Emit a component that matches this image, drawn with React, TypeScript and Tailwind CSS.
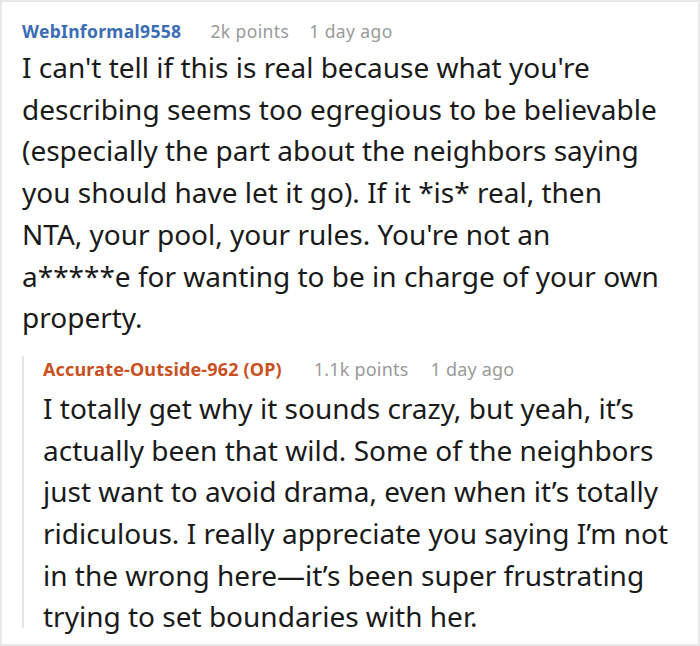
import React from "react";

export default function App() {
  return (
    <div className="w-[700px] h-[646px] bg-white border-2 border-[#e8e8e8] box-border overflow-hidden font-['Noto_Sans',sans-serif]">
      <div className="pl-[20px] pr-[4px] pt-[16px]">
        <div className="flex items-baseline text-[17.5px] leading-[26px] whitespace-nowrap">
          <span className="font-bold text-[#3a6db3] tracking-[0.32px]">WebInformal9558</span>
          <span className="ml-[29px] text-[#9a9a9a] tracking-[0.4px]">2k points</span>
          <span className="ml-[20px] text-[#9a9a9a] tracking-[0.4px]">1 day ago</span>
        </div>
        <p className="mt-[3px] text-[28px] leading-[41.7px] text-[#1a1a1a] whitespace-nowrap">
          I can't tell if this is real because what you're<br />
          describing seems too egregious to be believable<br />
          (especially the part about the neighbors saying<br />
          you should have let it go). If it *is* real, then<br />
          NTA, your pool, your rules. You're not an<br />
          a*****e for wanting to be in charge of your own<br />
          property.
        </p>
        <div className="mt-[17px] flex">
          <div className="w-[2px] bg-[#e6e6e6] mb-[10px]" />
          <div className="pl-[19px]">
            <div className="flex items-baseline text-[18px] leading-[26px] whitespace-nowrap">
              <span className="font-bold text-[#c9511f] tracking-[0.16px]">Accurate-Outside-962 (OP)</span>
              <span className="ml-[32px] text-[#9a9a9a] tracking-[0.2px]">1.1k points</span>
              <span className="ml-[22px] text-[#9a9a9a] tracking-[0.2px]">1 day ago</span>
            </div>
            <p className="mt-[6px] text-[28px] leading-[41.7px] text-[#1a1a1a] whitespace-nowrap">
              I totally get why it sounds crazy, but yeah, it’s<br />
              actually been that wild. Some of the neighbors<br />
              just want to avoid drama, even when it’s totally<br />
              ridiculous. I really appreciate you saying I’m not<br />
              in the wrong here—it’s been super frustrating<br />
              trying to set boundaries with her.
            </p>
          </div>
        </div>
      </div>
    </div>
  );
}
